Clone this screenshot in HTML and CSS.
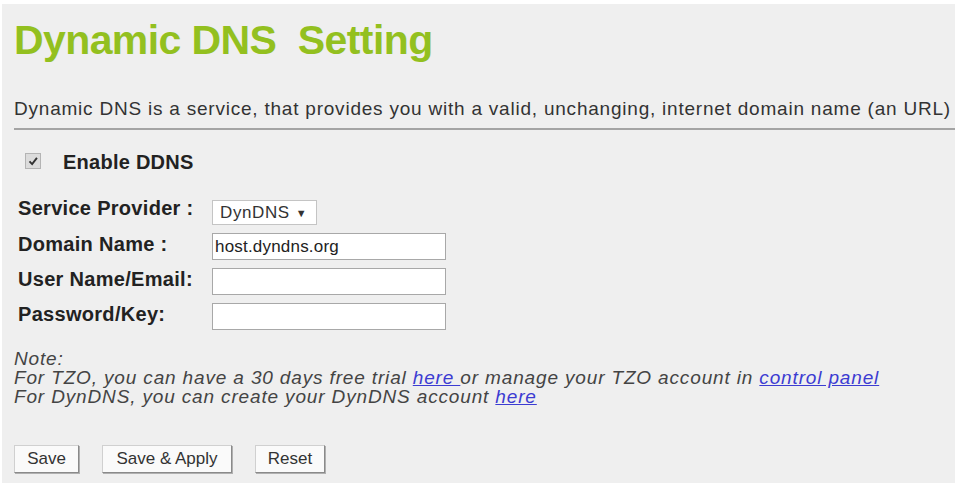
FILE: index.html
```html
<!DOCTYPE html>
<html lang="en">
  <head>
    <meta charset="UTF-8" />
    <title>Dynamic DNS Setting</title>
    <link rel="stylesheet" href="styles.css">
  </head>

  <body>
    <div class="panel">
      <h1 class="title">Dynamic DNS&nbsp; Setting</h1>
      <p class="intro">Dynamic DNS is a service, that provides you with a valid, unchanging, internet domain name (an URL)</p>

      <form class="ddns-form" onsubmit="return false;">
        <label class="enable">
          <input type="checkbox" checked disabled />
          <span class="box">
            <svg viewBox="0 0 16 16" width="16" height="16">
              <path d="M4 8.5 L7 11.5 L12.5 4.5" fill="none" stroke="#333" stroke-width="2.2" />
            </svg>
          </span>
          <span>Enable DDNS</span>
        </label>

        <div class="fields">
          <p class="label">Service Provider :</p>
          <div class="field">
            <span class="select">DynDNS <i class="arrow">&#9660;</i></span>
          </div>
          <p class="label">Domain Name :</p>
          <div class="field"><input type="text" class="text" value="host.dyndns.org" /></div>
          <p class="label">User Name/Email:</p>
          <div class="field"><input type="text" class="text" value="" /></div>
          <p class="label">Password/Key:</p>
          <div class="field"><input type="password" class="text" value="" /></div>
        </div>

        <div class="note">
          <p>Note:</p>
          <p>For TZO, you can have a 30 days free trial <a href="#">here </a>or manage your TZO account in <a href="#">control panel</a></p>
          <p>For DynDNS, you can create your DynDNS account <a href="#">here</a></p>
        </div>

        <div class="buttons">
          <button type="button" class="btn btn-save">Save</button>
          <button type="button" class="btn btn-apply">Save &amp; Apply</button>
          <button type="button" class="btn btn-reset">Reset</button>
        </div>
      </form>
    </div>
  </body>
</html>
```

FILE: styles.css
```css
html,
body,
p,
h1 {
  margin: 0;
}
body {
  padding: 4px 7px 4px 2px;
  font: 20px/22px "Liberation Sans", Arial, sans-serif;
  color: #333;
  background-color: #fff;
}
.panel {
  height: 479px;
  box-sizing: border-box;
  padding: 13px 0 0 12px;
  background-color: #efefef;
}

.title {
  font-size: 41px;
  font-weight: 700;
  line-height: 46px;
  color: #93c01f;
  letter-spacing: -0.6px;
}
.intro {
  margin-top: 35px;
  padding-bottom: 8px;
  border-bottom: 2px solid #a4a4a4;
  font-size: 19px;
  letter-spacing: 0.78px;
  color: #333;
  white-space: nowrap;
}

.enable {
  display: flex;
  align-items: center;
  margin: 21px 0 0 11px;
  font-weight: 700;
  letter-spacing: 0.25px;
  color: #222;
}
.enable input {
  display: none;
}
.enable .box {
  display: flex;
  box-sizing: border-box;
  width: 16px;
  height: 16px;
  margin: -3px 22px 0 0;
  background-color: #dcdcdc;
  border: 1px solid #b4b4b4;
}
.enable .box svg {
  width: 14px;
  height: 14px;
}

.fields {
  display: grid;
  grid-template-columns: 194px 240px;
  row-gap: 8px;
  margin: 24px 0 0 4px;
  align-items: start;
}
.label {
  font-weight: 700;
  letter-spacing: 0.3px;
  color: #222;
}
.field {
  display: flex;
}
.select {
  display: inline-flex;
  align-items: center;
  box-sizing: border-box;
  width: 105px;
  height: 25px;
  margin-top: 3px;
  padding: 0 7px;
  font-size: 17px;
  letter-spacing: 0.6px;
  color: #333;
  background-color: #fff;
  border: 1px solid #c4c4c4;
}
.select .arrow {
  margin-left: 6px;
  font-style: normal;
  font-size: 11px;
  letter-spacing: 0;
}
.text {
  box-sizing: border-box;
  width: 234px;
  height: 27px;
  padding: 0 2px;
  font: 17px "Liberation Sans", Arial, sans-serif;
  letter-spacing: 0.2px;
  color: #222;
  background-color: #fff;
  border: 1px solid #a8a8a8;
  border-radius: 0;
}

.note {
  margin-top: 19px;
  font-size: 19px;
  font-style: italic;
  line-height: 19px;
  letter-spacing: 0.85px;
  color: #444;
}
.note a {
  color: #3c3cd2;
}

.buttons {
  display: flex;
  gap: 23px;
  margin-top: 39px;
}
.btn {
  height: 28px;
  padding: 0;
  font: 17px "Liberation Sans", Arial, sans-serif;
  color: #333;
  background-color: #fafafa;
  border: 1px solid #d0d0d0;
  border-right-color: #8a8a8a;
  border-bottom-color: #8a8a8a;
  box-shadow: 1px 1px 0 #b0b0b0;
}
.btn-save {
  width: 65px;
}
.btn-apply {
  width: 130px;
}
.btn-reset {
  width: 70px;
}
```
